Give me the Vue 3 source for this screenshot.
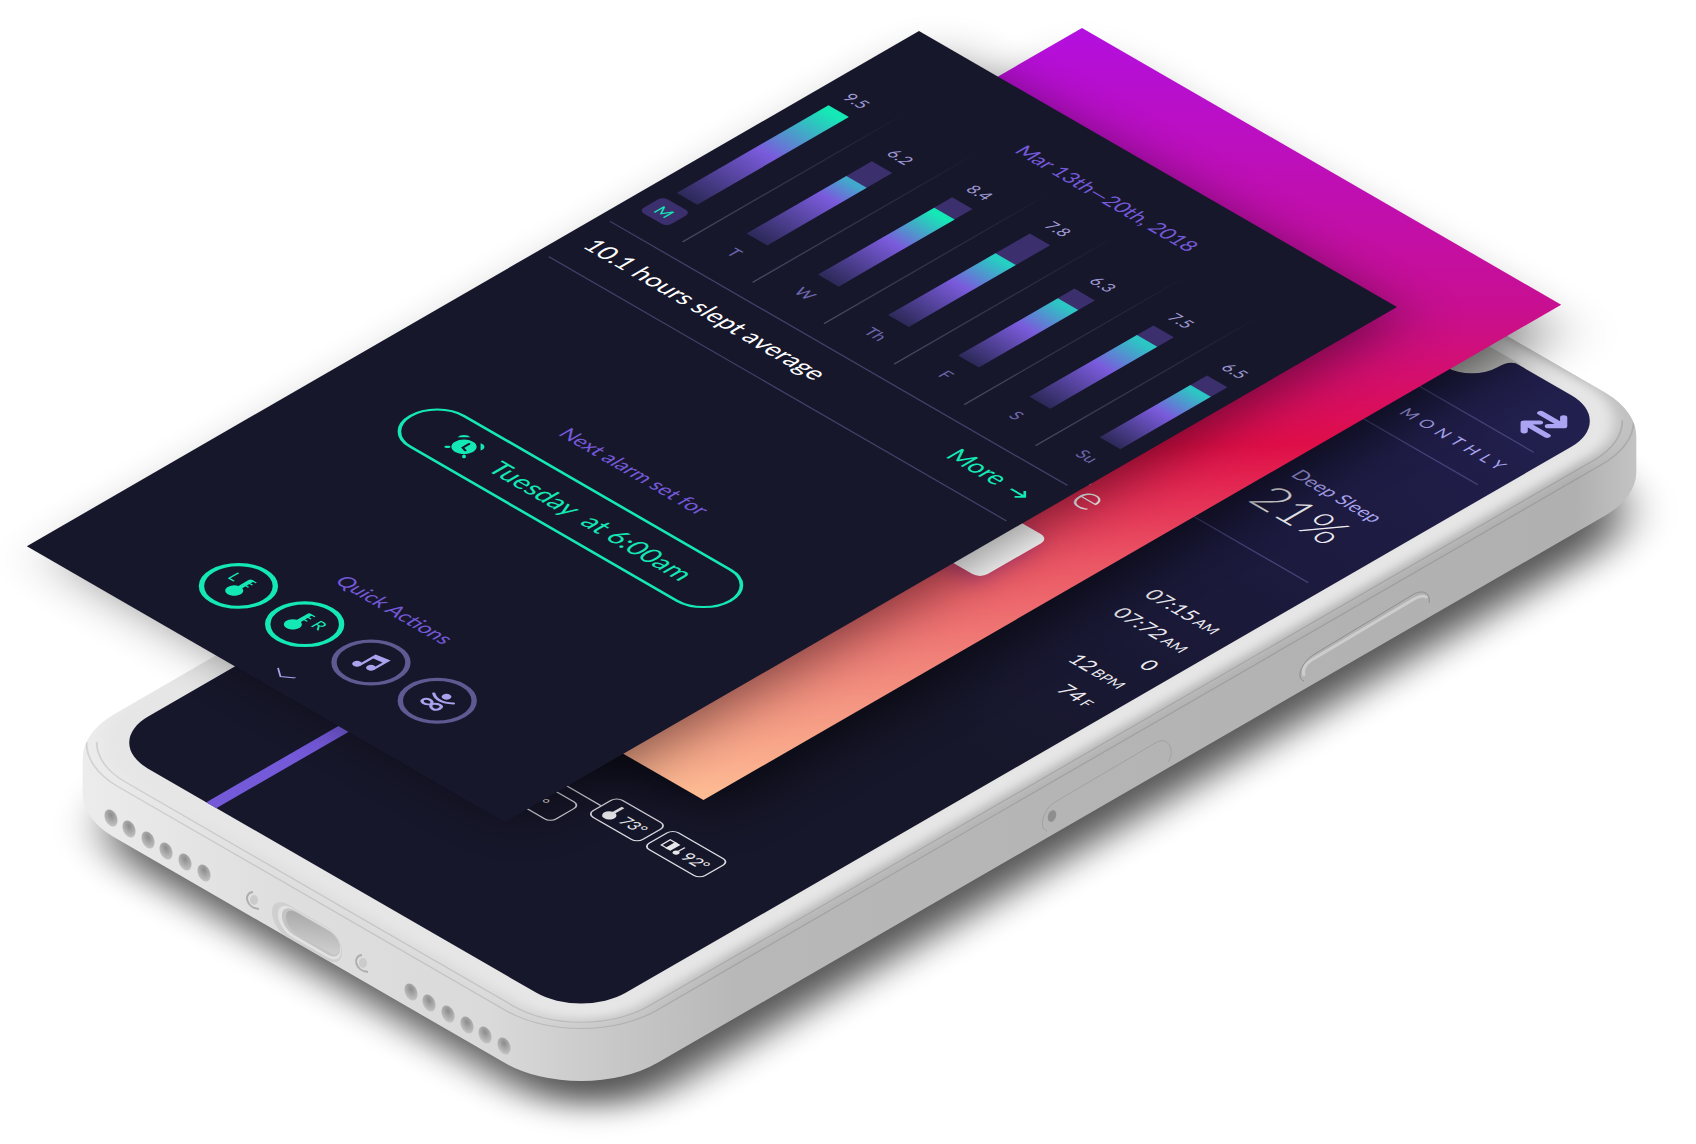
<script setup>
const days = [
  { name: 'M', hours: '9.5', track: 119, fill: 119, mid: 52, top: '#14e9b6', active: true },
  { name: 'T', hours: '6.2', track: 98, fill: 78, mid: 72, top: '#42a8cc' },
  { name: 'W', hours: '8.4', track: 105, fill: 91, mid: 56, top: '#14e9b6' },
  { name: 'Th', hours: '7.8', track: 111, fill: 84, mid: 58, top: '#25cfc2' },
  { name: 'F', hours: '6.3', track: 91, fill: 78, mid: 58, top: '#2cc6c4' },
  { name: 'S', hours: '7.5', track: 97, fill: 84, mid: 58, top: '#2cc6c4' },
  { name: 'Su', hours: '6.5', track: 84, fill: 71, mid: 58, top: '#2cc6c4' },
]

const stats = [
  { value: '07:15', unit: 'AM' },
  { value: '07:72', unit: 'AM' },
  { value: '0', unit: '' },
  { value: '12', unit: 'BPM' },
  { value: '74', unit: 'F' },
]

const speakerHoles = [
  [111, 818], [129, 829], [148, 840], [166, 851], [185, 862], [204, 873],
  [411, 992], [429, 1003], [448, 1014], [467, 1025], [485, 1035], [504, 1046],
]

const fillStyle = (d) => ({
  height: d.fill + 'px',
  background: `linear-gradient(to top, #2c2958, #7a5bdc ${d.mid}%, ${d.top} 96%)`,
})
</script>

<template>
  <main class="stage">
    <svg class="scene" viewBox="0 0 1696 1144">
      <defs>
        <linearGradient id="shell" gradientUnits="userSpaceOnUse" x1="-414" y1="414" x2="196" y2="-196">
          <stop offset="0" stop-color="#ececec" />
          <stop offset="0.12" stop-color="#dfdfdf" />
          <stop offset="0.26" stop-color="#dadada" />
          <stop offset="0.34" stop-color="#c8c8c8" />
          <stop offset="0.42" stop-color="#b8b8b8" />
          <stop offset="0.96" stop-color="#b0b0b0" />
          <stop offset="1" stop-color="#c4c4c4" />
        </linearGradient>
        <linearGradient id="port" x1="0" y1="0" x2="1" y2="1">
          <stop offset="0" stop-color="#a6a6a6" />
          <stop offset="1" stop-color="#d2d2d2" />
        </linearGradient>
        <radialGradient id="hole" cx="0.6" cy="0.35" r="0.7">
          <stop offset="0" stop-color="#8c8c8c" />
          <stop offset="1" stop-color="#c6c6c6" />
        </radialGradient>
        <filter id="soft4" x="-10%" y="-10%" width="120%" height="120%"><feGaussianBlur stdDeviation="4" /></filter>
        <filter id="soft14" x="-20%" y="-20%" width="140%" height="140%"><feGaussianBlur stdDeviation="14" /></filter>
        <filter id="soft20" x="-30%" y="-30%" width="160%" height="160%"><feGaussianBlur stdDeviation="20" /></filter>
        <clipPath id="shellClip">
          <path d="M3 831A60 60 0 0 1 -15 789V45A60 60 0 0 1 45 -15H352A60 60 0 0 1 394 3L417 26A60 60 0 0 1 435 68V812A60 60 0 0 1 375 872H68A60 60 0 0 1 26 854Z" />
        </clipPath>
      </defs>

      <!-- phone -->
      <g transform="matrix(1.2745 0.736 -1.2745 0.736 1138 145)">
        <rect x="42" y="42" width="414" height="842" rx="60" fill="#000" opacity="0.66" filter="url(#soft14)" />
        <path fill="url(#shell)" d="M3 831A60 60 0 0 1 -15 789V45A60 60 0 0 1 45 -15H352A60 60 0 0 1 394 3L417 26A60 60 0 0 1 435 68V812A60 60 0 0 1 375 872H68A60 60 0 0 1 26 854Z" />
        <g clip-path="url(#shellClip)">
          <rect x="-4" y="-4" width="383" height="820" rx="39" fill="none" stroke="#e6e6e6" stroke-width="20" filter="url(#soft4)" />
          <path class="seam" d="M377 -3A53 53 0 0 1 393 35V777A53 53 0 0 1 340 830H35A53 53 0 0 1 -3 814" />
          <path class="seam" d="M382 -7A59 59 0 0 1 399 35V777A59 59 0 0 1 340 836H35A59 59 0 0 1 -7 818" />
        </g>
        <foreignObject x="0" y="0" width="375" height="812">
          <section class="screen">
            <header class="screen-head">
              <button class="swap" type="button" aria-label="Swap">
                <svg width="24" height="32" viewBox="0 0 24 32" fill="none" stroke="#aaa4f2" stroke-width="4" stroke-linecap="round" stroke-linejoin="round">
                  <path d="M3 10H20M15 4L21 10L15 16M21 23H4M9 17L3 23L9 29" />
                </svg>
              </button>
            </header>
            <nav class="range"><a href="#">MONTHLY</a></nav>
            <div class="deep">
              <span class="deep-label">Deep Sleep</span>
              <strong class="deep-value">21%</strong>
            </div>
            <ul class="stats">
              <li v-for="(s, i) in stats" :key="i">{{ s.value }}<small v-if="s.unit">{{ s.unit }}</small></li>
            </ul>
            <div class="timeline">
              <div class="marker"></div>
              <div class="tags">
                <div class="branch">
                  <div class="wire"></div>
                  <div class="tag tag-short">70°</div>
                </div>
                <div class="tag">
                  <svg width="10" height="16" viewBox="0 0 10 16"><path fill="#e8e8ec" d="M4 1h2v7a4 4 0 1 1-2 0z" /></svg>
                  73°
                </div>
                <div class="tag tag-wide">
                  <svg width="15" height="14" viewBox="0 0 15 14">
                    <path fill="none" stroke="#e8e8ec" d="M1.500 3.500h5v7h-5z" />
                    <path fill="#e8e8ec" d="M5 3h4v8h-4zM12 3h1v5a2 2 0 1 1-1 0z" />
                  </svg>
                  92°
                </div>
              </div>
            </div>
          </section>
        </foreignObject>
        <path fill="#c6c6c3" d="M76 -1H300C293 0 292 4 292 10A20 20 0 0 1 272 30H104A20 20 0 0 1 84 10C84 4 83 0 76 -1Z" />
      </g>

      <!-- ports and side buttons -->
      <g>
        <ellipse v-for="([x, y], i) in speakerHoles" :key="i" :cx="x" :cy="y" rx="6" ry="9" fill="url(#hole)" :transform="`rotate(-24 ${x} ${y})`" />
        <g transform="matrix(1 0.577 0 1 306 931)">
          <rect x="-34" y="-16" width="70" height="33" rx="16" fill="#cfcfcf" />
          <rect x="-28" y="-15" width="63" height="29" rx="14" fill="#e2e2e2" />
          <rect x="-24" y="-14" width="58" height="25" rx="12" fill="#c4c4c4" />
          <rect x="-20" y="-13" width="54" height="21" rx="10" fill="url(#port)" />
        </g>
        <g fill="none" stroke="#aeaeae" stroke-width="2">
          <path d="M253 892C243 893 246 908 259 909" />
          <path d="M362 955C352 956 355 971 368 972" />
        </g>
        <ellipse cx="254" cy="900" rx="4" ry="5" fill="#cbcbcb" />
        <ellipse cx="363" cy="963" rx="4" ry="5" fill="#cbcbcb" />
        <g fill="none" stroke="#8f8f8f" stroke-width="1">
          <path d="M1304 681C1296 679 1300 664 1313 655L1414 594C1424 589 1431 594 1429 603" />
          <path stroke="#cdcdcd" stroke-width="3" d="M1304 676C1302 668 1306 663 1315 658L1414 599C1420 596 1425 595 1427 598" />
          <path stroke="#a2a2a2" d="M1047 831C1038 829 1043 809 1055 802L1157 742C1168 736 1176 751 1168 762" />
        </g>
        <ellipse cx="1052" cy="816" rx="4" ry="6" fill="#8e8e8e" transform="rotate(20 1052 816)" />
      </g>

      <!-- gradient layer -->
      <g transform="matrix(1.2745 0.736 -1.2745 0.736 1082 28)">
        <rect x="22" y="24" width="368" height="660" fill="#000" opacity="0.56" filter="url(#soft20)" />
        <foreignObject x="0" y="0" width="376" height="673">
          <section class="welcome">
            <h2>ie</h2>
            <button class="cta" type="button" aria-label="Continue"></button>
          </section>
        </foreignObject>
      </g>

      <!-- weekly sleep layer -->
      <g transform="matrix(1.2745 0.736 -1.2745 0.736 919 31)">
        <rect x="22" y="6" width="362" height="690" fill="#000" opacity="0.46" filter="url(#soft20)" />
        <foreignObject x="0" y="0" width="375" height="700">
          <section class="week">
            <h1 class="dates">Mar 13th—20th, 2018</h1>
            <div class="chart">
              <template v-for="(d, i) in days" :key="d.name">
                <div v-if="i" class="rule"></div>
                <div class="day">
                  <span class="hours">{{ d.hours }}</span>
                  <div class="track" :style="{ height: d.track + 'px' }"><div :style="fillStyle(d)"></div></div>
                  <span class="name" :class="{ active: d.active }">{{ d.name }}</span>
                </div>
              </template>
            </div>
            <div class="summary">
              <span>10.1 hours slept average</span>
              <a href="#">More
                <svg width="12" height="12" viewBox="0 0 12 12" fill="none" stroke="#14e9b6" stroke-width="1.500"><path d="M0 6H11M7 2L11 6L7 10" /></svg>
              </a>
            </div>
            <h2 class="sub sub-alarm">Next alarm set for</h2>
            <button class="alarm" type="button">
              <svg width="24" height="24" viewBox="0 0 24 24" stroke-linecap="round">
                <circle cx="12" cy="12" r="7" fill="#14e9b6" />
                <path fill="none" stroke="#17172b" stroke-width="1.500" d="M12 8V13L15 14" />
                <path fill="#14e9b6" d="M3 8A4 4 0 0 1 8 3ZM21 8A4 4 0 0 0 16 3Z" />
                <path stroke="#14e9b6" stroke-width="2" d="M6 18L5 19M18 18L19 19" />
              </svg>
              <span>Tuesday&nbsp; at 6:00am</span>
            </button>
            <h2 class="sub sub-quick">Quick Actions</h2>
            <div class="actions">
              <button class="on" type="button" aria-label="Left side temperature">
                <span>L</span>
                <svg width="14" height="24" viewBox="0 0 14 24"><path fill="#14e9b6" d="M5 4a1 1 0 0 1 3 0v8a5 5 0 1 1-3 0z" /><path stroke="#14e9b6" stroke-width="1" d="M7 3h3M7 6h3M7 9h3" /></svg>
              </button>
              <button class="on" type="button" aria-label="Right side temperature">
                <svg width="14" height="24" viewBox="0 0 14 24"><path fill="#14e9b6" d="M5 4a1 1 0 0 1 3 0v8a5 5 0 1 1-3 0z" /><path stroke="#14e9b6" stroke-width="1" d="M7 3h3M7 6h3M7 9h3" /></svg>
                <span>R</span>
              </button>
              <button type="button" aria-label="Music">
                <svg width="20" height="20" viewBox="0 0 22 22" fill="#a9a3ee"><path d="M7 3L18 1V15H16V6L9 7V18H7Z" /><circle cx="6" cy="18" r="3" /><circle cx="15" cy="15" r="3" /></svg>
              </button>
              <button type="button" aria-label="Meditation">
                <svg width="20" height="20" viewBox="0 0 22 22"><circle cx="12" cy="4" r="3" fill="#a9a3ee" /><path fill="none" stroke="#a9a3ee" stroke-width="2" stroke-linecap="round" d="M4 7Q12 13 20 6M11 16C9 12 4 13 4 16S9 20 11 16S18 12 18 16S13 20 11 16Z" /></svg>
              </button>
            </div>
            <svg class="more-down" width="14" height="8" viewBox="0 0 14 8" fill="none" stroke="#a9a3ee"><path d="M0 1L7 6L14 1" /></svg>
          </section>
        </foreignObject>
      </g>
    </svg>
  </main>
</template>

<style>
body {
  margin: 0;
  background: #fff;
}
</style>

<style scoped>
.stage {
  overflow: hidden;
  font-family: Lato, "Open Sans", sans-serif;
}
.scene {
  display: block;
  width: 100%;
  height: auto;
}
foreignObject {
  overflow: visible;
}
h1,
h2,
ul {
  margin: 0;
  padding: 0;
  font-weight: 400;
  list-style: none;
}
button {
  margin: 0;
  padding: 0;
  border: 0;
  background: none;
  font: inherit;
  color: inherit;
}
a {
  color: inherit;
  text-decoration: none;
}
.seam {
  fill: none;
  stroke: #000;
  stroke-opacity: 0.11;
  stroke-width: 1;
}

/* phone screen */
.screen {
  height: 812px;
  border-radius: 35px;
  overflow: hidden;
  background: radial-gradient(circle at 100% 0, #22204f 0, #1c1a3e 220px, #17172b 480px);
  color: #ececf0;
}
.screen-head {
  display: flex;
  justify-content: flex-end;
  align-items: center;
  height: 53px;
  padding: 6px 14px 0 0;
  box-sizing: border-box;
}
.swap,
.swap svg {
  display: block;
}
.range {
  display: flex;
  justify-content: flex-end;
  align-items: center;
  height: 43px;
  margin: 0 11px;
  border: solid #464378;
  border-width: 1px 0;
  font-size: 11px;
  letter-spacing: 4px;
  color: #a9a3ee;
}
.range a {
  margin-right: -2px;
}
.deep {
  display: flex;
  flex-direction: column;
  align-items: flex-start;
  margin: 0 11px;
  padding: 52px 0 26px 273px;
  border-bottom: 1px solid #464378;
}
.deep-label {
  font-size: 13px;
  line-height: 20px;
  color: #a9a3ee;
}
.deep-value {
  font-size: 32px;
  line-height: 34px;
  font-weight: 300;
}
.stats {
  padding: 56px 13px 0 0;
  font-size: 14px;
  line-height: 24px;
  text-align: right;
}
.stats small {
  margin-left: 2px;
  font-size: 10px;
}
.timeline {
  display: flex;
  height: 405px;
}
.marker {
  width: 8px;
  margin: 160px 0 0 81px;
  background: #7459d9;
}
.tags {
  display: flex;
  align-items: flex-start;
  margin: 236px 0 0 101px;
}
.branch {
  width: 48px;
  padding-top: 12px;
}
.wire {
  height: 1px;
  margin-bottom: 7px;
  background: #dcdce4;
}
.tag {
  display: flex;
  align-items: center;
  justify-content: center;
  box-sizing: border-box;
  width: 40px;
  height: 24px;
  border: 1px solid #dcdce4;
  border-radius: 5px;
  font-size: 11px;
}
.tag svg {
  margin-right: 2px;
}
.tag-short {
  padding-right: 6px;
}
.tag-wide {
  width: 45px;
  margin-left: 4px;
}

/* gradient layer */
.welcome {
  display: flex;
  flex-direction: column;
  height: 673px;
  padding: 297px 42px 0;
  box-sizing: border-box;
  background: linear-gradient(135deg, #b30fdf 0%, #c80f92 36%, #df0e48 54%, #ea5564 69%, #f28d7e 85%, #fdbd94 100%);
  color: #fff;
}
.welcome h2 {
  padding-right: 3px;
  font-size: 30px;
  line-height: 36px;
  font-weight: 300;
  text-align: right;
}
.cta {
  height: 54px;
  margin-top: 27px;
  border-radius: 6px;
  background: #fff;
  box-shadow: 0 4px 14px #6a1a8a66;
}

/* weekly sleep layer */
.week {
  display: flex;
  flex-direction: column;
  align-items: center;
  height: 700px;
  padding-top: 30px;
  box-sizing: border-box;
  background: #17172b;
}
.dates,
.sub {
  font-size: 14px;
  line-height: 20px;
  color: #7459d9;
}
.chart {
  align-self: stretch;
  display: flex;
  justify-content: space-between;
  height: 177px;
  margin-top: 9px;
  padding: 0 12px 0 15px;
}
.rule {
  width: 1px;
  background: linear-gradient(to bottom, transparent, #4b4963);
}
.day {
  display: flex;
  flex-direction: column;
  justify-content: flex-end;
  align-items: center;
  width: 16px;
  padding-bottom: 4px;
}
.hours {
  margin-bottom: 8px;
  font-size: 11px;
  line-height: 12px;
  color: #a09bd6;
}
.track {
  display: flex;
  flex-direction: column;
  justify-content: flex-end;
  width: 16px;
  background: #3b2f6d;
}
.name {
  width: 22px;
  margin-top: 8px;
  border-radius: 4px;
  font-size: 11px;
  line-height: 19px;
  text-align: center;
  color: #6c66ac;
}
.active {
  background: #3b2f6d;
  color: #14e9b6;
}
.summary {
  align-self: stretch;
  display: flex;
  justify-content: space-between;
  align-items: center;
  height: 44px;
  margin: 14px 8px 0;
  padding: 0 8px 3px 6px;
  border: solid #434069;
  border-width: 1px 0;
  font-size: 17px;
  line-height: 20px;
  color: #fff;
}
.summary a {
  display: flex;
  align-items: center;
  gap: 8px;
  color: #14e9b6;
}
.summary svg {
  margin-top: 4px;
}
.sub-alarm {
  margin-top: 102px;
}
.alarm {
  display: flex;
  align-items: center;
  gap: 12px;
  box-sizing: border-box;
  width: 253px;
  height: 44px;
  margin-top: 18px;
  padding-left: 29px;
  border: 2px solid #14e9b6;
  border-radius: 22px;
  font-size: 18px;
  color: #14e9b6;
  white-space: nowrap;
}
.sub-quick {
  margin-top: 106px;
}
.actions {
  display: flex;
  gap: 8px;
  margin-top: 13px;
}
.actions button {
  display: flex;
  align-items: center;
  justify-content: center;
  box-sizing: border-box;
  width: 44px;
  height: 44px;
  border: 3px solid #5f5a92;
  border-radius: 50%;
  font-size: 11px;
  line-height: 12px;
  color: #14e9b6;
}
.actions button.on {
  border-color: #14e9b6;
}
.actions span {
  margin-bottom: 10px;
}
.more-down {
  display: block;
  margin-top: 17px;
}
</style>
